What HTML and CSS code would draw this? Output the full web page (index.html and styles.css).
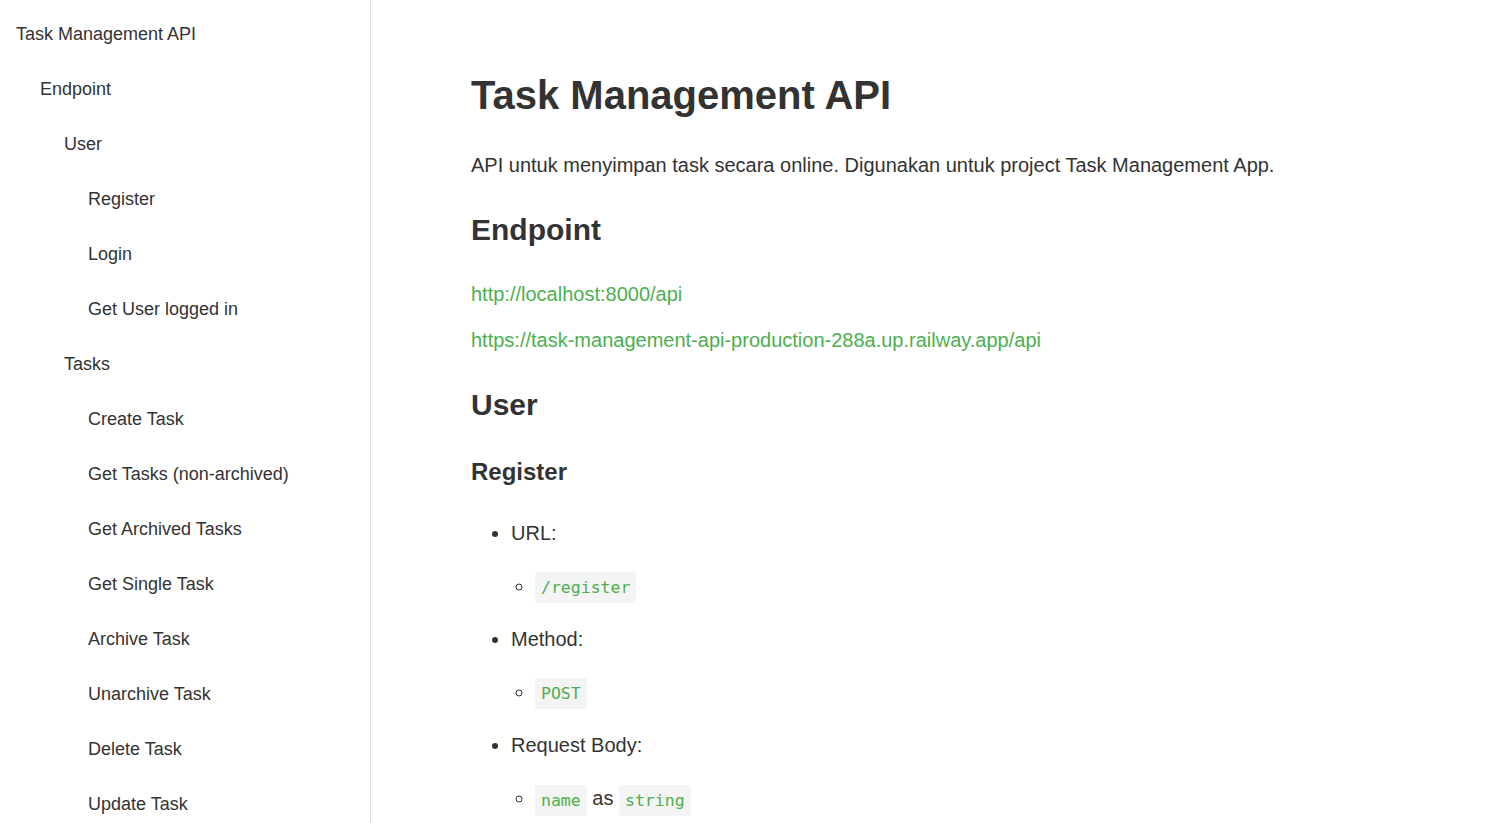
FILE: index.html
```html
<!DOCTYPE html>
<html lang="id">
<head>
<meta charset="utf-8">
<title>Task Management API</title>
<link rel="stylesheet" href="styles.css">
</head>
<body>
<div class="layout">
  <nav class="sidebar">
    <ul class="toc">
      <li class="lvl0"><a href="#">Task Management API</a></li>
      <li class="lvl1"><a href="#">Endpoint</a></li>
      <li class="lvl2"><a href="#">User</a></li>
      <li class="lvl3"><a href="#">Register</a></li>
      <li class="lvl3"><a href="#">Login</a></li>
      <li class="lvl3"><a href="#">Get User logged in</a></li>
      <li class="lvl2"><a href="#">Tasks</a></li>
      <li class="lvl3"><a href="#">Create Task</a></li>
      <li class="lvl3"><a href="#">Get Tasks (non-archived)</a></li>
      <li class="lvl3"><a href="#">Get Archived Tasks</a></li>
      <li class="lvl3"><a href="#">Get Single Task</a></li>
      <li class="lvl3"><a href="#">Archive Task</a></li>
      <li class="lvl3"><a href="#">Unarchive Task</a></li>
      <li class="lvl3"><a href="#">Delete Task</a></li>
      <li class="lvl3"><a href="#">Update Task</a></li>
    </ul>
  </nav>
  <main class="content">
    <h1 class="title">Task Management API</h1>
    <p class="lead">API untuk menyimpan task secara online. Digunakan untuk project Task Management App.</p>
    <h2 class="section">Endpoint</h2>
    <p class="link-line"><a href="#">http://localhost:8000/api</a></p>
    <p class="link-line"><a href="#">https://task-management-api-production-288a.up.railway.app/api</a></p>
    <h2 class="section section-user">User</h2>
    <h3 class="sub">Register</h3>
    <ul class="spec">
      <li>URL:
        <ul class="spec-sub">
          <li><code class="code">/register</code></li>
        </ul>
      </li>
      <li>Method:
        <ul class="spec-sub">
          <li><code class="code">POST</code></li>
        </ul>
      </li>
      <li>Request Body:
        <ul class="spec-sub">
          <li><code class="code">name</code> as <code class="code">string</code></li>
        </ul>
      </li>
    </ul>
  </main>
</div>
</body>
</html>
```

FILE: styles.css
```css
* { box-sizing: border-box; }
html, body {
  margin: 0;
  padding: 0;
  height: 100%;
  overflow: hidden;
  background: #fff;
}
body {
  font-family: "Liberation Sans", Arial, sans-serif;
  color: #333;
}
.layout {
  display: flex;
  height: 823px;
}
.sidebar {
  width: 371px;
  flex: 0 0 371px;
  border-right: 1px solid #ddd;
  height: 100%;
  overflow: hidden;
  padding-top: 6px;
}
.toc {
  list-style: none;
  margin: 0;
  padding: 0;
}
.toc a {
  display: block;
  font-size: 18px;
  line-height: 22px;
  padding: 16.5px 0;
  color: #333;
  text-decoration: none;
}
.lvl0 { padding-left: 16px; }
.lvl1 { padding-left: 40px; }
.lvl2 { padding-left: 64px; }
.lvl3 { padding-left: 88px; }

.content {
  flex: 1;
  padding: 71px 100px 0 100px;
  overflow: hidden;
}
.title {
  margin: 0 0 31px;
  font-size: 40px;
  line-height: 48px;
  font-weight: bold;
}
.lead {
  margin: 0 0 32px;
  font-size: 20px;
  line-height: 30px;
}
.section {
  margin: 0 0 31px;
  font-size: 30px;
  line-height: 36px;
  font-weight: bold;
}
.link-line {
  margin: 0 0 16px;
  font-size: 20px;
  line-height: 30px;
}
.link-line a {
  color: #4caf50;
  text-decoration: none;
}
.section-user {
  margin-top: 32px;
  margin-bottom: 34px;
}
.sub {
  margin: 0;
  font-size: 24px;
  line-height: 30px;
  font-weight: bold;
}
.spec {
  margin: 0;
  padding: 10px 0 0 40px;
  list-style: disc;
  font-size: 20px;
}
.spec > li {
  margin-top: 20px;
  line-height: 33px;
}
.spec-sub {
  margin: 0;
  padding-left: 24px;
  list-style: circle;
}
.spec-sub > li {
  margin-top: 20px;
  line-height: 33px;
}
.code {
  font-family: "DejaVu Sans Mono", "Liberation Mono", monospace;
  font-size: 16.5px;
  line-height: 21px;
  display: inline-block;
  padding: 5px 6px;
  background: #f4f4f4;
  color: #4caf50;
  border-radius: 2px;
  vertical-align: middle;
}
```
